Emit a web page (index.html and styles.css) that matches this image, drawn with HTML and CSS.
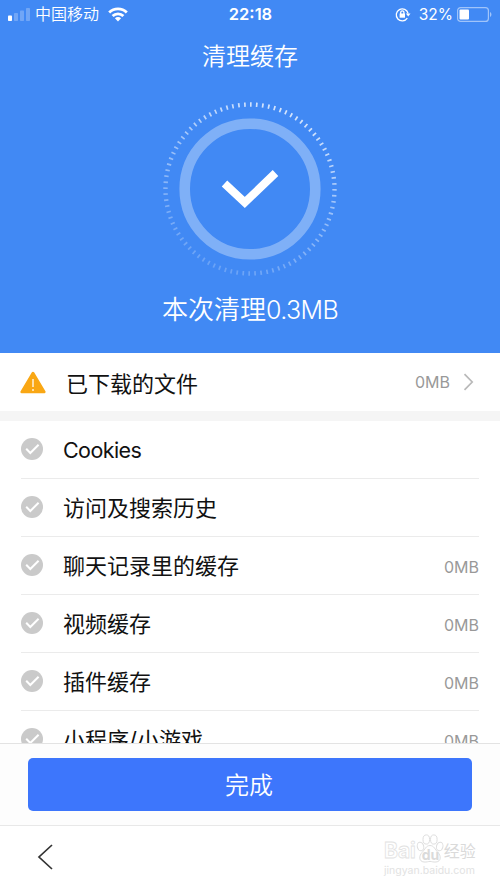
FILE: index.html
```html
<!DOCTYPE html>
<html lang="zh-CN">
<head>
    <meta charset="UTF-8">
    <meta name="viewport" content="width=device-width, initial-scale=1.0">
    <title>清理缓存</title>
    <link rel="stylesheet" href="styles.css">
</head>
<body>

    <!-- Shared check icon for the list -->
    <svg class="defs" width="0" height="0">
        <symbol id="check" viewBox="0 0 22 22">
            <circle cx="11" cy="11" r="11" fill="#cacaca"/>
            <path d="M5.2 10.8l4.1 4.2 8.3-8.2" fill="none" stroke="#fff" stroke-width="2"/>
        </symbol>
    </svg>

    <div class="header">
        <div class="status-bar">
            <div class="status-left">
                <svg width="23" height="13" viewBox="0 0 23 13" fill="#fff">
                    <rect x="0" y="7.5" width="4" height="5.5" rx=".8"/>
                    <g opacity=".25">
                        <rect x="6" y="5" width="4" height="8" rx=".8"/>
                        <rect x="12" y="2.5" width="4" height="10.5" rx=".8"/>
                        <rect x="18" y="0" width="4" height="13" rx=".8"/>
                    </g>
                </svg>
                <span class="carrier">中国移动</span>
                <svg class="wifi" width="20" height="15" viewBox="0 0 20 15" fill="none" stroke="#fff" stroke-width="2.8">
                    <path d="M1.2 5.6a12.4 12.4 0 0 1 17.6 0"/>
                    <path d="M4.6 9.1a7.6 7.6 0 0 1 10.8 0"/>
                    <path d="M10 14.5L6.9 11.3a4.4 4.4 0 0 1 6.2 0z" fill="#fff" stroke="none"/>
                </svg>
            </div>
            <div class="time">22:18</div>
            <div class="status-right">
                <svg width="16" height="15" viewBox="0 0 16 15" fill="none" stroke="#fff" stroke-width="1.3">
                    <path d="M12.3 11.2a6 6 0 1 1 .8-4.7"/>
                    <path d="M10.9 6.6h4.6l-2.3 2.9z" fill="#fff" stroke="none"/>
                    <rect x="4.6" y="6.5" width="5.4" height="4.2" fill="#fff" stroke="none"/>
                    <path d="M5.7 7V5.4a1.6 1.6 0 0 1 3.2 0V7"/>
                </svg>
                <span class="percent">32%</span>
                <svg width="36" height="15" viewBox="0 0 36 15">
                    <rect x=".6" y=".6" width="30.8" height="13.8" rx="3" fill="none" stroke="#fff" stroke-opacity=".5" stroke-width="1.2"/>
                    <rect x="2.5" y="2.5" width="9.5" height="10" rx="1" fill="#fff"/>
                    <path d="M33 5c1.9.7 1.9 4.3 0 5z" fill="#fff" opacity=".5"/>
                </svg>
            </div>
        </div>
        <h1 class="title">清理缓存</h1>
        <svg class="ring" width="180" height="180" viewBox="0 0 180 180" fill="none">
            <defs>
                <linearGradient id="fade" x1=".7" y1="0" x2=".3" y2="1">
                    <stop offset="0" stop-color="#fff" stop-opacity=".8"/>
                    <stop offset=".4" stop-color="#fff" stop-opacity=".5"/>
                    <stop offset="1" stop-color="#fff" stop-opacity=".2"/>
                </linearGradient>
            </defs>
            <circle cx="90" cy="90" r="84.5" stroke="url(#fade)" stroke-width="4.4" pathLength="88" stroke-dasharray=".28 .72"/>
            <circle cx="90" cy="90" r="65.3" stroke="#fff" stroke-opacity=".33" stroke-width="10.6"/>
            <path d="M64.5 84.5L84.8 103.5L115.5 74" stroke="#fff" stroke-width="8"/>
        </svg>
        <p class="result">本次清理<span>0.3MB</span></p>
    </div>

    <div class="files">
        <svg width="26" height="23" viewBox="0 0 26 23">
            <path d="M13 2L24.3 21H1.7z" fill="#f9a714" stroke="#f9a714" stroke-width="2.6" stroke-linejoin="round"/>
            <path d="M13 8v8M13 18v2" stroke="#fff" stroke-opacity=".85" stroke-width="1.5"/>
        </svg>
        <span class="name">已下载的文件</span>
        <span class="size">0MB</span>
        <svg class="arrow" width="11" height="18" viewBox="0 0 11 18">
            <path d="M1.5 1.2L9.2 9L1.5 16.8" fill="none" stroke="#b9b9b9" stroke-width="1.7"/>
        </svg>
    </div>

    <!-- Cache list -->
    <div class="list">
        <div class="item">
            <svg class="check"><use href="#check"/></svg>
            <span class="name latin">Cookies</span>
        </div>
        <div class="item">
            <svg class="check"><use href="#check"/></svg>
            <span class="name">访问及搜索历史</span>
        </div>
        <div class="item">
            <svg class="check"><use href="#check"/></svg>
            <span class="name">聊天记录里的缓存</span>
            <span class="size">0MB</span>
        </div>
        <div class="item">
            <svg class="check"><use href="#check"/></svg>
            <span class="name">视频缓存</span>
            <span class="size">0MB</span>
        </div>
        <div class="item">
            <svg class="check"><use href="#check"/></svg>
            <span class="name">插件缓存</span>
            <span class="size">0MB</span>
        </div>
        <div class="item">
            <svg class="check"><use href="#check"/></svg>
            <span class="name">小程序/小游戏</span>
            <span class="size">0MB</span>
        </div>
    </div>

    <div class="action">
        <button class="done">完成</button>
    </div>

    <div class="nav">
        <svg width="17" height="28" viewBox="0 0 17 28">
            <path d="M15 2L2 14L15 26" fill="none" stroke="#333" stroke-width="1.7"/>
        </svg>
        <div class="watermark">
            <div class="brand">
                <span>Bai</span>
                <span class="paw">
                    <svg width="28" height="30" viewBox="0 0 28 30" fill="#fff" stroke="#dedede">
                        <ellipse cx="4.5" cy="12.5" rx="3.2" ry="4.3" transform="rotate(-15 4.5 12.5)"/>
                        <ellipse cx="10.3" cy="5.5" rx="3.3" ry="4.6"/>
                        <ellipse cx="17.8" cy="5.5" rx="3.3" ry="4.6"/>
                        <ellipse cx="23.7" cy="12.5" rx="3.2" ry="4.3" transform="rotate(15 23.7 12.5)"/>
                        <path d="M14 11.5c4 0 5 4 8 7s3.5 9-2 9.5c-3 .3-4-.6-6-.6s-3 .9-6 .6c-5.5-.5-5-6.500-2-9.5s4-7 8-7z"/>
                    </svg>
                    <span class="du">du</span>
                </span>
                <span class="cn">经验</span>
            </div>
            <div class="url">jingyan.baidu.com</div>
        </div>
    </div>

</body>
</html>
```
FILE: styles.css
```css
* {
    box-sizing: border-box;
}

body {
    display: flex;
    flex-direction: column;
    height: 889px;
    margin: 0;
    overflow: hidden;
    background-color: #ffffff;
    font-family: Inter, "Noto Sans CJK SC", sans-serif;
    color: #111111;
}

svg {
    display: block;
    flex: none;
}

.header {
    display: flex;
    flex-direction: column;
    align-items: center;
    height: 353px;
    background-color: #4189f4;
    color: #ffffff;
}

.status-bar {
    display: grid;
    grid-template-columns: 1fr auto 1fr;
    align-items: center;
    width: 100%;
    height: 28px;
    padding: 0 7px 0 8px;
    font-size: 16px;
}

.status-left,
.status-right {
    display: flex;
    align-items: center;
}

.status-right {
    justify-content: flex-end;
}

.carrier {
    margin: 0 9px 0 4px;
    padding-bottom: 2px;
    font-weight: 350;
}

.time {
    font-weight: 600;
    font-size: 16.5px;
}

.percent {
    margin: 0 4px 0 8px;
    font-size: 15.5px;
}

.title {
    margin: 11px 0 0;
    font-size: 24px;
    font-weight: 350;
    line-height: 36px;
}

.ring {
    margin-top: 24px;
}

.result {
    margin: 12px 0 0;
    font-size: 26px;
    font-weight: 350;
    line-height: 38px;
}

.result span {
    font-size: 25px;
    letter-spacing: -0.6px;
}

.files {
    display: flex;
    align-items: center;
    height: 68px;
    padding: 0 26px 0 20px;
    border-bottom: 10px solid #f5f5f5;
}

.files .name {
    margin-left: 20px;
    padding-top: 4px;
}

.arrow {
    margin-left: 13px;
}

.name {
    flex: 1;
    font-size: 22px;
    line-height: 32px;
}

.latin {
    font-size: 21.5px;
    letter-spacing: -0.6px;
}

.size {
    font-size: 16px;
    color: #999999;
}

.list {
    height: 322px;
    padding: 0 21px;
    overflow: hidden;
}

.item {
    display: flex;
    align-items: center;
    height: 58px;
    padding-bottom: 1px;
    border-bottom: 1px solid #ebebeb;
}

.item .name {
    margin-left: 20px;
    padding-top: 2px;
}

.item .size {
    padding-top: 4px;
}

.check {
    width: 22px;
    height: 22px;
}

.action {
    height: 82px;
    padding: 14px 28px;
    border-top: 1px solid #e3e3e3;
    background-color: #fdfdfd;
}

.done {
    display: block;
    width: 100%;
    height: 53px;
    padding: 0 2px 3px 0;
    border: none;
    border-radius: 5px;
    background-color: #3d76fc;
    color: #ffffff;
    font-family: inherit;
    font-size: 24px;
    font-weight: 350;
}

.nav {
    display: flex;
    justify-content: space-between;
    height: 64px;
    padding: 8px 24px 0 37px;
    border-top: 1px solid #e8e8e8;
}

.nav > svg {
    margin-top: 9px;
}

.watermark {
    width: 92px;
    color: #ffffff;
}

.brand {
    display: flex;
    align-items: flex-end;
    height: 30px;
    font-size: 21px;
    font-weight: 700;
    line-height: 26px;
    -webkit-text-stroke: 0.8px #e2e2e2;
}

.paw {
    position: relative;
    -webkit-text-stroke: 0;
}

.du {
    position: absolute;
    left: 6px;
    bottom: 1px;
    font-size: 14px;
    line-height: 16px;
    color: #dadada;
}

.cn {
    font-size: 16px;
    font-weight: 400;
    -webkit-text-stroke: 0;
    color: #dadada;
}

.url {
    font-size: 10.5px;
    line-height: 13px;
    color: #e2e2e2;
}
```
